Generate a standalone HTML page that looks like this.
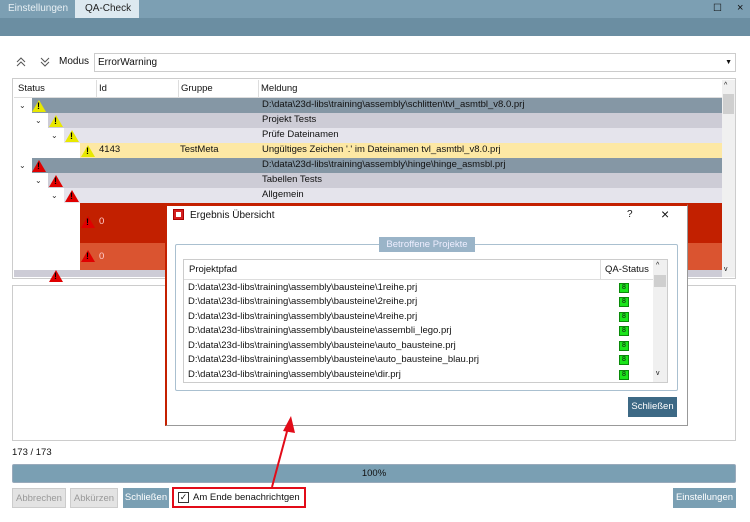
<!DOCTYPE html>
<html><head><meta charset="utf-8"><style>
*{margin:0;padding:0;box-sizing:border-box}
body{width:750px;height:522px;position:relative;background:#fff;font-family:"Liberation Sans",sans-serif;font-size:9.5px;color:#111;overflow:hidden}
.a{position:absolute}
.row{position:absolute;left:14px;width:708px;height:15px;line-height:15px}
.tri{position:absolute;width:0;height:0;border-left:7px solid transparent;border-right:7px solid transparent;border-bottom:12px solid #e8e800}
.tri:after{content:"!";position:absolute;left:-2px;top:1px;font-size:9px;font-weight:bold;color:#000}
.tri.r{border-bottom-color:#e00000}
.chev{position:absolute;font-size:8px;color:#333}
.btn{position:absolute;top:488px;height:20px;line-height:20px;text-align:center;font-size:9.5px}
.pr{position:absolute;left:188px;height:14px;line-height:14px}
.ok{position:absolute;left:619px;width:10px;height:10px;background:#1be51b;border:1px solid #0a8a0a;font-size:7px;line-height:8px;text-align:center}
</style></head><body>
<div class="a" style="left:0;top:0;width:750px;height:18px;background:#7c9fb3"></div>
<div class="a" style="left:0;top:18px;width:750px;height:18px;background:#6b8ea2"></div>
<div class="a" style="left:8px;top:3px;color:#e8f0f4;font-size:10px">Einstellungen</div>
<div class="a" style="left:75px;top:0;width:64px;height:18px;background:#dde9f0;color:#222;font-size:10px;line-height:18px;padding-left:10px">QA-Check</div>
<div class="a" style="left:713px;top:3px;font-size:10px">☐</div>
<div class="a" style="left:737px;top:2px;font-size:11px">×</div>

<svg class="a" style="left:14px;top:55px" width="40" height="14"><path d="M3 7l4-4 4 4M3 11l4-4 4 4M27 3l4 4 4-4M27 7l4 4 4-4" stroke="#555" fill="none" stroke-width="1"/></svg>
<div class="a" style="left:59px;top:56px;font-size:10px">Modus</div>
<div class="a" style="left:94px;top:53px;width:642px;height:19px;border:1px solid #ccc;padding-left:3px;line-height:17px;font-size:10px">ErrorWarning<span style="position:absolute;right:3px;font-size:7px">▼</span></div>

<div class="a" style="left:12px;top:78px;width:724px;height:201px;border:1px solid #ccc"></div>
<div class="a" style="left:722px;top:80px;width:13px;height:197px;background:#f0f0f0"></div>
<div class="a" style="left:723px;top:94px;width:11px;height:20px;background:#cfcfcf"></div>
<div class="a" style="left:724px;top:82px;font-size:7px">^</div>
<div class="a" style="left:724px;top:266px;font-size:7px">v</div>
<div class="a" style="left:14px;top:80px;width:708px;height:18px;line-height:18px;border-bottom:1px solid #ddd">
<span class="a" style="left:4px">Status</span><span class="a" style="border-left:1px solid #ddd;padding-left:2px;left:82px">Id</span><span class="a" style="left:164px;border-left:1px solid #ddd;padding-left:2px">Gruppe</span><span class="a" style="left:244px;border-left:1px solid #ddd;padding-left:2px">Meldung</span></div>

<div class="row" style="top:98px;left:32px;width:690px;background:#8597a5"></div><span class="a" style="left:262px;top:99px">D:\data\23d-libs\training\assembly\schlitten\tvl_asmtbl_v8.0.prj</span>
<div class="row" style="top:113px;left:48px;width:674px;background:#cdccd6"></div><span class="a" style="left:262px;top:114px">Projekt Tests</span>
<div class="row" style="top:128px;left:64px;width:658px;background:#e5e4ec"></div><span class="a" style="left:262px;top:129px">Prüfe Dateinamen</span>
<div class="row" style="top:143px;left:80px;width:642px;background:#fde8a4"></div><span class="a" style="left:99px;top:144px">4143</span><span class="a" style="left:180px;top:144px">TestMeta</span><span class="a" style="left:262px;top:144px">Ungültiges Zeichen '.' im Dateinamen tvl_asmtbl_v8.0.prj</span>
<div class="row" style="top:158px;left:32px;width:690px;background:#8597a5"></div><span class="a" style="left:262px;top:159px">D:\data\23d-libs\training\assembly\hinge\hinge_asmsbl.prj</span>
<div class="row" style="top:173px;left:48px;width:674px;background:#cdccd6"></div><span class="a" style="left:262px;top:174px">Tabellen Tests</span>
<div class="row" style="top:188px;left:64px;width:658px;background:#e5e4ec"></div><span class="a" style="left:262px;top:189px">Allgemein</span>
<div class="a" style="left:80px;top:203px;width:642px;height:40px;background:#c22000"></div>
<div class="a" style="left:80px;top:243px;width:642px;height:27px;background:#da5430"></div>
<div class="a" style="left:14px;top:270px;width:708px;height:7px;background:#cdccd6"></div>
<span class="a" style="left:99px;top:216px;color:#fcc">0</span><span class="a" style="left:99px;top:251px;color:#fcc">0</span>
<div class="tri" style="left:32px;top:100px"></div><div class="tri" style="left:49px;top:115px"></div><div class="tri" style="left:65px;top:130px"></div><div class="tri" style="left:81px;top:145px"></div>
<div class="tri r" style="left:32px;top:160px"></div><div class="tri r" style="left:49px;top:175px"></div><div class="tri r" style="left:65px;top:190px"></div><div class="tri r" style="left:81px;top:216px"></div><div class="tri r" style="left:81px;top:250px"></div><div class="tri r" style="left:49px;top:270px"></div>
<div class="chev" style="left:19px;top:101px">⌄</div><div class="chev" style="left:35px;top:116px">⌄</div><div class="chev" style="left:51px;top:131px">⌄</div><div class="chev" style="left:19px;top:161px">⌄</div><div class="chev" style="left:35px;top:176px">⌄</div><div class="chev" style="left:51px;top:191px">⌄</div>

<div class="a" style="left:12px;top:285px;width:724px;height:156px;border:1px solid #ccc"></div>
<div class="a" style="left:12px;top:447px;font-size:9.5px">173 / 173</div>
<div class="a" style="left:12px;top:464px;width:724px;height:19px;background:#7a9fb3;border:1px solid #9ab;border-radius:2px;text-align:center;line-height:17px">100%</div>
<div class="btn" style="left:12px;width:54px;background:#e3e3e3;border:1px solid #ccc;color:#999">Abbrechen</div>
<div class="btn" style="left:70px;width:48px;background:#e3e3e3;border:1px solid #ccc;color:#999">Abkürzen</div>
<div class="btn" style="left:123px;width:46px;background:#7a9fb3;color:#fff">Schließen</div>
<div class="a" style="left:172px;top:487px;width:134px;height:21px;border:2px solid #e20b18;line-height:17px;padding-left:19px">Am Ende benachrichtgen<span class="a" style="left:4px;top:3px;width:11px;height:11px;border:1px solid #333;font-size:9px;line-height:9px;text-align:center">✓</span></div>
<div class="btn" style="left:673px;width:63px;background:#7a9fb3;color:#fff">Einstellungen</div>

<div class="a" style="left:165px;top:204px;width:523px;height:222px;background:#fff;border:1px solid #999;border-top:2px solid #c42000;border-left:2px solid #c42000"></div>
<div class="a" style="left:173px;top:209px;width:11px;height:11px;background:#d42020;border:1px solid #a00"><div style="margin:2px;width:5px;height:5px;background:#fff"></div></div>
<div class="a" style="left:190px;top:210px;font-size:10px">Ergebnis Übersicht</div>
<div class="a" style="left:627px;top:209px;font-size:10px">?</div>
<div class="a" style="left:661px;top:206px;font-size:14px">×</div>
<div class="a" style="left:175px;top:244px;width:503px;height:147px;border:1px solid #aac0d0;border-radius:2px"></div>
<div class="a" style="left:379px;top:237px;width:96px;height:15px;background:#9ab4c8;color:#eef;text-align:center;line-height:15px">Betroffene Projekte</div>
<div class="a" style="left:183px;top:259px;width:485px;height:124px;border:1px solid #ccc"></div>
<div class="a" style="left:184px;top:260px;width:469px;height:20px;border-bottom:1px solid #ddd;line-height:20px;padding-left:5px">Projektpfad<span class="a" style="left:416px;border-left:1px solid #ddd;padding-left:4px">QA-Status</span></div>
<div class="a" style="left:653px;top:260px;width:14px;height:122px;background:#f0f0f0"></div>
<div class="a" style="left:654px;top:275px;width:12px;height:12px;background:#cfcfcf"></div>
<div class="a" style="left:656px;top:262px;font-size:7px">^</div><div class="a" style="left:656px;top:370px;font-size:7px">v</div>
<div class="pr" style="top:281px">D:\data\23d-libs\training\assembly\bausteine\1reihe.prj</div><div class="ok" style="top:283px">8</div>
<div class="pr" style="top:295px">D:\data\23d-libs\training\assembly\bausteine\2reihe.prj</div><div class="ok" style="top:297px">8</div>
<div class="pr" style="top:310px">D:\data\23d-libs\training\assembly\bausteine\4reihe.prj</div><div class="ok" style="top:312px">8</div>
<div class="pr" style="top:324px">D:\data\23d-libs\training\assembly\bausteine\assembli_lego.prj</div><div class="ok" style="top:326px">8</div>
<div class="pr" style="top:339px">D:\data\23d-libs\training\assembly\bausteine\auto_bausteine.prj</div><div class="ok" style="top:341px">8</div>
<div class="pr" style="top:353px">D:\data\23d-libs\training\assembly\bausteine\auto_bausteine_blau.prj</div><div class="ok" style="top:355px">8</div>
<div class="pr" style="top:368px">D:\data\23d-libs\training\assembly\bausteine\dir.prj</div><div class="ok" style="top:370px">8</div>
<div class="a" style="left:628px;top:397px;width:49px;height:20px;background:#3d6985;color:#fff;text-align:center;line-height:20px">Schließen</div>

<svg class="a" style="left:0;top:0" width="750" height="522"><line x1="272" y1="487" x2="289" y2="424" stroke="#e20b18" stroke-width="2"/><polygon points="291,416 283,431 295,433" fill="#e20b18"/></svg>
</body></html>
